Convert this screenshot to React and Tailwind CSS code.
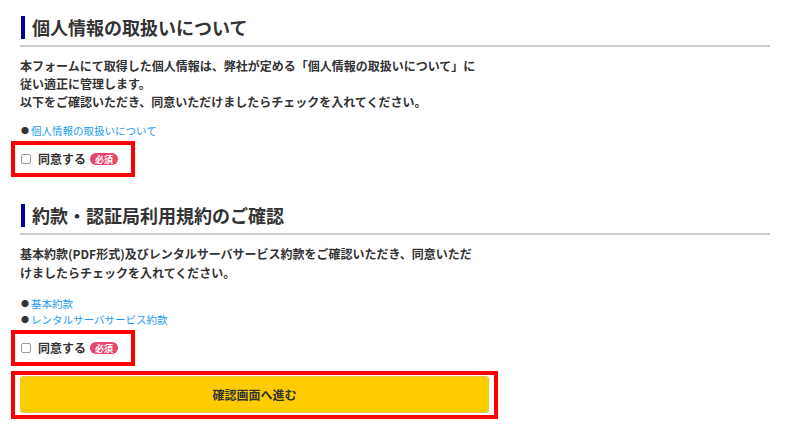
import React, { useState } from "react";

const font = {
  fontFamily: '"Noto Sans CJK JP", "Noto Sans", sans-serif',
};

const SectionTitle = ({ children }) => (
  <div className="flex items-center border-b-2 border-[#cccccc] pb-[6px]">
    <span className="ml-px mr-[7px] h-[23px] w-[4px] bg-[#000099]" />
    <h2 className="text-[18px] font-bold leading-[23px] text-[#333333]">
      {children}
    </h2>
  </div>
);

const AgreeBox = ({ checked, onChange }) => (
  <div className="ml-[-9px] flex h-[36px] w-[124px] items-center border-4 border-[#ff0000] pl-[6px]">
    <label className="flex cursor-pointer items-center">
      <input
        type="checkbox"
        checked={checked}
        onChange={onChange}
        className="h-[10px] w-[10px] appearance-none rounded-[2px] border border-[#9a9a9a] bg-white checked:bg-[#3b82f6]"
      />
      <span className="ml-[7px] text-[12px] font-bold text-[#333333]">
        同意する
      </span>
      <span className="ml-[4px] flex h-[12px] w-[28px] items-center justify-center rounded-full bg-[#e8456b] text-[9px] font-bold leading-none text-white">
        必須
      </span>
    </label>
  </div>
);

const LinkItem = ({ children }) => (
  <div className="flex items-center text-[10.5px] leading-[16px]">
    <span className="mr-[2px] ml-px text-[8px] text-[#333333]">●</span>
    <a href="#" className="text-[#1e9cf0]">
      {children}
    </a>
  </div>
);

const App = () => {
  const [agreePrivacy, setAgreePrivacy] = useState(false);
  const [agreeTerms, setAgreeTerms] = useState(false);

  return (
    <div className="min-h-[441px] bg-white pl-5 pr-[30px] pt-[16px]" style={font}>
      {/* 個人情報 */}
      <section>
        <SectionTitle>個人情報の取扱いについて</SectionTitle>
        <p className="mt-[10px] whitespace-nowrap text-[12px] font-bold leading-[18px] text-[#333333]">
          本フォームにて取得した個人情報は、弊社が定める「個人情報の取扱いについて」に
          <br />
          従い適正に管理します。
          <br />
          以下をご確認いただき、同意いただけましたらチェックを入れてください。
        </p>
        <div className="mt-[12px]">
          <LinkItem>個人情報の取扱いについて</LinkItem>
        </div>
        <div className="mt-[2px]">
          <AgreeBox
            checked={agreePrivacy}
            onChange={() => setAgreePrivacy(!agreePrivacy)}
          />
        </div>
      </section>

      {/* 約款 */}
      <section className="mt-[27px]">
        <SectionTitle>約款・認証局利用規約のご確認</SectionTitle>
        <p className="mt-[9px] whitespace-nowrap text-[12px] font-bold leading-[19px] text-[#333333]">
          基本約款(PDF形式)及びレンタルサーバサービス約款をご確認いただき、同意いただ
          <br />
          けましたらチェックを入れてください。
        </p>
        <div className="mt-[14px]">
          <LinkItem>基本約款</LinkItem>
          <LinkItem>レンタルサーバサービス約款</LinkItem>
        </div>
        <div className="mt-[2px]">
          <AgreeBox
            checked={agreeTerms}
            onChange={() => setAgreeTerms(!agreeTerms)}
          />
        </div>
      </section>

      {/* ボタン */}
      <div className="ml-[-9px] mt-[5px] w-[487px] border-4 border-[#ff0000] px-[5px] pb-[2px] pt-px">
        <button
          type="button"
          className="flex h-[37px] w-full items-center justify-center rounded-[3px] border border-[#e8c64a] bg-[#ffcc00] text-[12px] font-bold text-[#333333]"
        >
          確認画面へ進む
        </button>
      </div>
    </div>
  );
};

export default App;
